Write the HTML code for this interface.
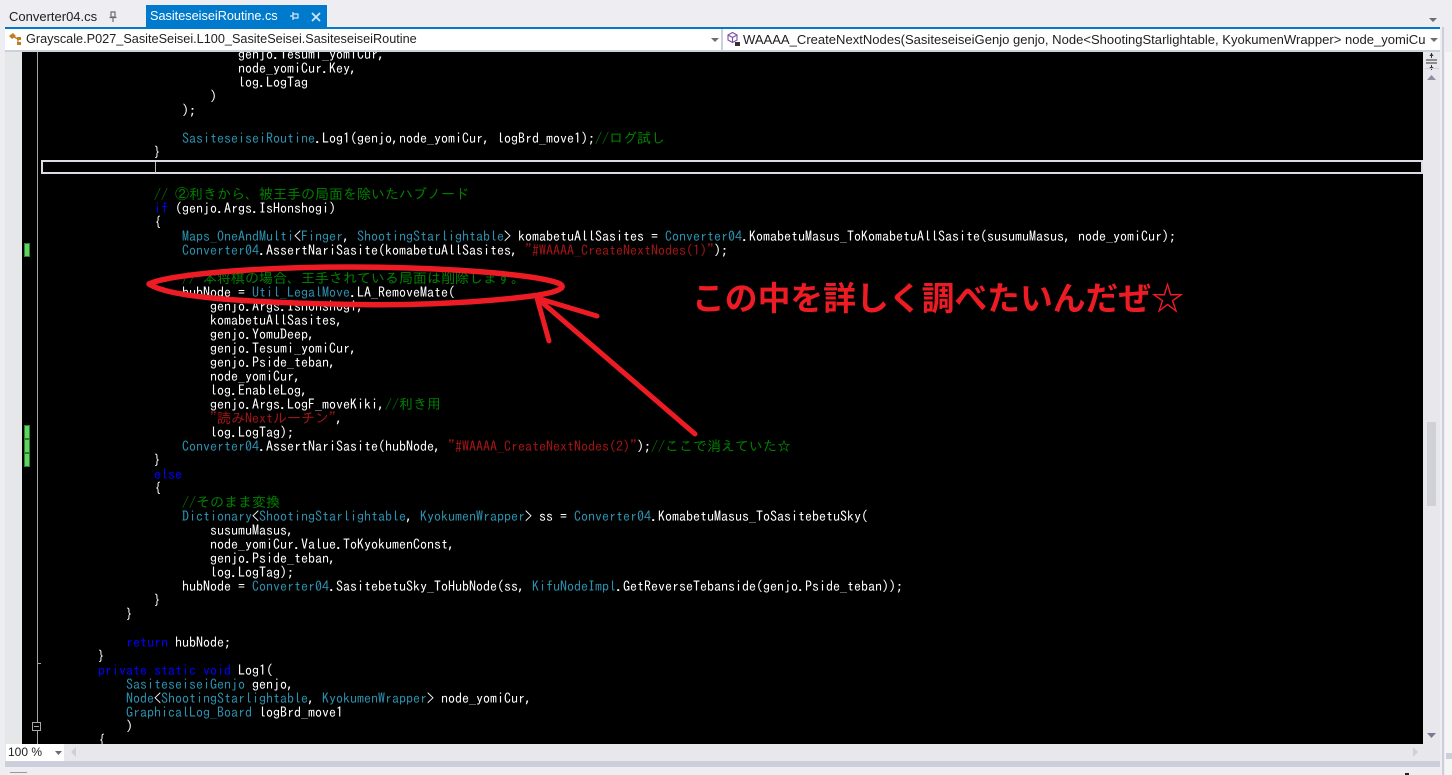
<!DOCTYPE html>
<html lang="ja">
<head>
<meta charset="utf-8">
<style>
html,body{margin:0;padding:0;width:1452px;height:775px;overflow:hidden;background:#eeeef2}
div,svg{position:absolute}
.ui{font-family:"Liberation Sans","Noto Sans CJK JP",sans-serif;font-size:12.7px;white-space:nowrap}
#ed{left:22px;top:52px;width:1401px;height:692px;background:#000;overflow:hidden}
pre{position:absolute;left:20px;top:-5px;margin:0;font-family:"IPAGothic","Liberation Mono",monospace;font-size:14px;line-height:14px;color:#fff}
pre b{font-weight:normal;color:#0000ff}
pre i{font-style:normal;color:#2b91af}
pre u{text-decoration:none;color:#008000}
pre s{text-decoration:none;color:#a31515}
</style>
</head>
<body>
<div class="ui" style="left:9px;top:9px;color:#1e1e1e;font-size:13px">Converter04.cs</div>
<svg style="left:108px;top:11px" width="10" height="12" viewBox="0 0 10 12"><path d="M3 1h4v5H3zM1.500 6.500h7M5 7v4" fill="none" stroke="#6d6d70" stroke-width="1.200"/></svg>
<div style="left:146px;top:5px;width:181px;height:22px;background:#007acc"></div>
<div class="ui" style="left:150px;top:9px;color:#fff">SasiteseiseiRoutine.cs</div>
<svg style="left:289px;top:11px" width="12" height="12" viewBox="0 0 12 12"><path d="M4 3h5v4H4zM4 1v8M1 5h3" fill="none" stroke="#fff" stroke-width="1"/></svg>
<svg style="left:310px;top:11px" width="12" height="12" viewBox="0 0 12 12"><path d="M2 2l8 8M10 2l-8 8" fill="none" stroke="#d0e6f5" stroke-width="1.800"/></svg>
<svg style="left:1428px;top:17px" width="10" height="6" viewBox="0 0 10 6"><path d="M1 1h8L5 5z" fill="#6d6d70"/></svg>

<div style="left:5px;top:27px;width:1435px;height:2px;background:#007acc"></div>
<div style="left:5px;top:29px;width:1435px;height:22px;background:#fff"></div>
<div style="left:5px;top:50px;width:1435px;height:2px;background:#ccd0dc"></div>
<div style="left:721px;top:29px;width:2px;height:22px;background:#ccd0dc"></div>
<svg style="left:8px;top:31px" width="16" height="16" viewBox="0 0 16 16"><path d="M1 5l4-3 3 3-4 3zM9 6h4v3h-4zM9 11h4v3H9z" fill="#c27d1f"/><path d="M6 6l4 2M10 8v4" stroke="#c27d1f" fill="none" stroke-width="1.300"/></svg>
<div class="ui" style="left:26px;top:32px;color:#1e1e1e">Grayscale.P027_SasiteSeisei.L100_SasiteSeisei.SasiteseiseiRoutine</div>
<svg style="left:711px;top:38px" width="8" height="5" viewBox="0 0 8 5"><path d="M0 0h8L4 4z" fill="#6d6d70"/></svg>
<svg style="left:726px;top:31px" width="16" height="16" viewBox="0 0 16 16"><path d="M6.500 1.500l4.500 2.500v5l-4.500 2.500-4.500-2.500v-5zM2 4l4.500 2.500L11 4M6.500 6.500v5" fill="none" stroke="#7a4fa8" stroke-width="1.100"/><rect x="9" y="11" width="5" height="4" fill="#333"/></svg>
<div class="ui" style="left:743px;top:32px;width:683px;overflow:hidden;color:#1e1e1e;font-size:13.05px">WAAAA_CreateNextNodes(SasiteseiseiGenjo genjo, Node&lt;ShootingStarlightable, KyokumenWrapper&gt; node_yomiCur, GraphicalLog_Board logBrd_move1)</div>
<svg style="left:1430px;top:38px" width="8" height="5" viewBox="0 0 8 5"><path d="M0 0h8L4 4z" fill="#6d6d70"/></svg>

<div style="left:5px;top:52px;width:17px;height:692px;background:#e6e7e8"></div>
<div id="ed">
<pre>                            genjo.Tesumi_yomiCur,
                            node_yomiCur.Key,
                            log.LogTag
                        )
                    );

                    <i>SasiteseiseiRoutine</i>.Log1(genjo,node_yomiCur, logBrd_move1);<u>//ログ試し</u>
                }


                <u>// ②利きから、被王手の局面を除いたハブノード</u>
                <b>if</b> (genjo.Args.IsHonshogi)
                {
                    <i>Maps_OneAndMulti</i>&lt;<i>Finger</i>, <i>ShootingStarlightable</i>&gt; komabetuAllSasites = <i>Converter04</i>.KomabetuMasus_ToKomabetuAllSasite(susumuMasus, node_yomiCur);
                    <i>Converter04</i>.AssertNariSasite(komabetuAllSasites, <s>"#WAAAA_CreateNextNodes(1)"</s>);

                    <u>// 本将棋の場合、王手されている局面は削除します。</u>
                    hubNode = <i>Util_LegalMove</i>.LA_RemoveMate(
                        genjo.Args.IsHonshogi,
                        komabetuAllSasites,
                        genjo.YomuDeep,
                        genjo.Tesumi_yomiCur,
                        genjo.Pside_teban,
                        node_yomiCur,
                        log.EnableLog,
                        genjo.Args.LogF_moveKiki,<u>//利き用</u>
                        <s>"読みNextルーチン"</s>,
                        log.LogTag);
                    <i>Converter04</i>.AssertNariSasite(hubNode, <s>"#WAAAA_CreateNextNodes(2)"</s>);<u>//ここで消えていた☆</u>
                }
                <b>else</b>
                {
                    <u>//そのまま変換</u>
                    <i>Dictionary</i>&lt;<i>ShootingStarlightable</i>, <i>KyokumenWrapper</i>&gt; ss = <i>Converter04</i>.KomabetuMasus_ToSasitebetuSky(
                        susumuMasus,
                        node_yomiCur.Value.ToKyokumenConst,
                        genjo.Pside_teban,
                        log.LogTag);
                    hubNode = <i>Converter04</i>.SasitebetuSky_ToHubNode(ss, <i>KifuNodeImpl</i>.GetReverseTebanside(genjo.Pside_teban));
                }
            }

            <b>return</b> hubNode;
        }
        <b>private</b> <b>static</b> <b>void</b> Log1(
            <i>SasiteseiseiGenjo</i> genjo,
            <i>Node</i>&lt;<i>ShootingStarlightable</i>, <i>KyokumenWrapper</i>&gt; node_yomiCur,
            <i>GraphicalLog_Board</i> logBrd_move1
            )
        {</pre>
</div>

<!-- outline margin -->
<div style="left:37px;top:52px;width:1px;height:670px;background:#a5a5a5"></div>
<div style="left:37px;top:731px;width:1px;height:13px;background:#a5a5a5"></div>
<div style="left:38px;top:663px;width:3px;height:1px;background:#a5a5a5"></div>
<div style="left:32px;top:722px;width:7px;height:7px;border:1px solid #a5a5a5;background:#000"></div>
<div style="left:34px;top:726px;width:5px;height:1px;background:#a5a5a5"></div>

<!-- change bars -->
<div style="left:24px;top:243px;width:6px;height:14px;background:#5cd65c;outline:1px solid #2f7d32;outline-offset:-1px"></div>
<div style="left:24px;top:425px;width:6px;height:14px;background:#5cd65c;outline:1px solid #2f7d32;outline-offset:-1px"></div>
<div style="left:24px;top:439px;width:6px;height:14px;background:#5cd65c;outline:1px solid #2f7d32;outline-offset:-1px"></div>
<div style="left:24px;top:453px;width:6px;height:14px;background:#5cd65c;outline:1px solid #2f7d32;outline-offset:-1px"></div>

<!-- current line box -->
<div style="left:41px;top:160px;width:1378px;height:10px;border:2px solid #dcdce6"></div>
<div style="left:155px;top:162px;width:1px;height:11px;background:#bdbdbd"></div>

<!-- annotations -->
<svg style="left:0;top:0" width="1452" height="775" viewBox="0 0 1452 775">
<g fill="none" stroke="#ed1c24" stroke-linecap="round" stroke-linejoin="round">
<path d="M149 284C170 274 260 267 350 267C440 267 534 274 558 283C568 287 560 292 532 296C470 304 395 306 330 304C250 302 170 298 149 284Z" stroke-width="5.500"/>
<path d="M537 298L695 434M537 298L597 316M537 298L549 341" stroke-width="5"/>
</g>
<text x="692" y="310" font-family="'Noto Sans CJK JP','IPAGothic',sans-serif" font-size="32.800" font-weight="700" fill="#ed1c24">この中を詳しく調べたいんだぜ☆</text>
</svg>

<!-- vertical scrollbar -->
<div style="left:1423px;top:52px;width:17px;height:692px;background:#e8e8ec"></div>
<svg style="left:1425px;top:52px" width="14" height="26" viewBox="0 0 14 26"><path d="M1 8h11M1 11h11M6.500 1v5M6.500 13v5" stroke="#333" fill="none"/><path d="M4.500 4l2-3 2 3zM4.500 15l2 3 2-3z" fill="#333"/><path d="M-2 16.500h16" stroke="#ccceDB"/></svg>
<svg style="left:1427px;top:74px" width="10" height="7" viewBox="0 0 10 7"><path d="M0 6h9L4.500 1z" fill="#8f90a2"/></svg>
<div style="left:1427px;top:422px;width:9px;height:84px;background:#d0d1d7"></div>
<svg style="left:1427px;top:732px" width="10" height="7" viewBox="0 0 10 7"><path d="M0 1h9L4.500 6z" fill="#7a7b90"/></svg>

<!-- horizontal scrollbar / zoom -->
<div style="left:5px;top:744px;width:1435px;height:17px;background:#e8e8ec"></div>
<div class="ui" style="left:6px;top:744px;width:58px;height:17px;background:#fff;font-size:12px;line-height:17px;color:#1e1e1e;text-indent:2px">100 %</div>
<svg style="left:55px;top:751px" width="8" height="5" viewBox="0 0 8 5"><path d="M0 0h7L3.500 4z" fill="#6d6d70"/></svg>
<svg style="left:70px;top:747px" width="7" height="11" viewBox="0 0 7 11"><path d="M6 0v10L1 5z" fill="#cfd0d6"/></svg>
<svg style="left:1412px;top:747px" width="7" height="11" viewBox="0 0 7 11"><path d="M1 0v10l5-5z" fill="#cfd0d6"/></svg>
<div style="left:5px;top:761px;width:1435px;height:6px;background:#ccceDB"></div>

<!-- right strip -->
<div style="left:1442px;top:27px;width:2px;height:748px;background:#ccceDB"></div>
<div style="left:1445px;top:52px;width:7px;height:723px;background:#f5f5f5"></div>
<div style="left:1446px;top:753px;width:6px;height:6px;background:#ccceDB"></div>
<div style="left:1405px;top:773px;width:4px;height:2px;background:#222"></div>
<div style="left:10px;top:772px;width:17px;height:1px;background:#999"></div>
</body>
</html>
